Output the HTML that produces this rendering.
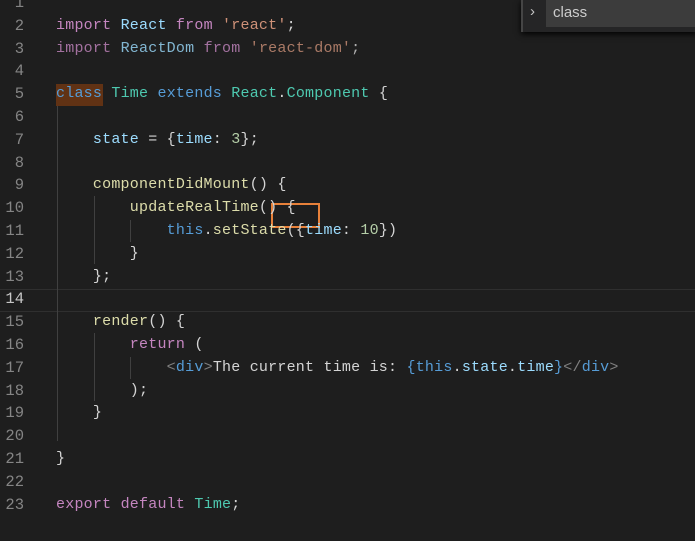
<!DOCTYPE html>
<html><head><meta charset="utf-8"><style>
body{margin:0;width:695px;height:541px;background:#1e1e1e;overflow:hidden;position:relative;font-family:"Liberation Mono",monospace;font-size:15px}
.ln{position:absolute;left:0;width:24px;text-align:right;color:#858585;height:22.8px;line-height:22.8px;font-size:15.5px}
.cd{position:absolute;left:56px;white-space:pre;color:#d4d4d4;height:22.8px;line-height:22.8px;letter-spacing:0.22px}
.k{color:#c586c0}.v{color:#9cdcfe}.s{color:#ce9178}.b{color:#569cd6}.t{color:#4ec9b0}.f{color:#dcdcaa}.n{color:#b5cea8}.g{color:#808080}
.guide{position:absolute;width:1px;background:#404040}
</style></head><body>
<div style="position:absolute;left:0;top:289px;width:695px;height:21px;border-top:1px solid #2f2f2f;border-bottom:1px solid #2f2f2f"></div>
<div class="guide" style="left:57px;top:106px;height:335px"></div>
<div class="guide" style="left:94px;top:196px;height:68px;"></div>
<div class="guide" style="left:94px;top:333px;height:68px;"></div>
<div class="guide" style="left:130px;top:220px;height:22px;"></div>
<div class="guide" style="left:130px;top:357px;height:22px;"></div>
<div style="position:absolute;left:56px;top:84px;width:47px;height:22px;background:#613214"></div>
<div style="position:absolute;left:271px;top:203px;width:45px;height:21px;border:2px solid #e8813a"></div>
<div class="ln" style="top:-8px">1</div>
<div class="ln" style="top:14.8px">2</div><div class="cd" style="top:14.8px"><span class="k">import</span> <span class="v">React</span> <span class="k">from</span> <span class="s">'react'</span>;</div>
<div class="ln" style="top:37.6px">3</div><div class="cd" style="top:37.6px;opacity:.8"><span class="k">import</span> <span class="v">ReactDom</span> <span class="k">from</span> <span class="s">'react-dom'</span>;</div>
<div class="ln" style="top:60.4px">4</div>
<div class="ln" style="top:83.2px">5</div><div class="cd" style="top:83.2px"><span class="b">class</span> <span class="t">Time</span> <span class="b">extends</span> <span class="t">React</span>.<span class="t">Component</span> {</div>
<div class="ln" style="top:106px">6</div>
<div class="ln" style="top:128.8px">7</div><div class="cd" style="top:128.8px">    <span class="v">state</span> = {<span class="v">time</span>: <span class="n">3</span>};</div>
<div class="ln" style="top:151.6px">8</div>
<div class="ln" style="top:174.4px">9</div><div class="cd" style="top:174.4px">    <span class="f">componentDidMount</span>() {</div>
<div class="ln" style="top:197.2px">10</div><div class="cd" style="top:197.2px">        <span class="f">updateRealTime</span>() {</div>
<div class="ln" style="top:220px">11</div><div class="cd" style="top:220px">            <span class="b">this</span>.<span class="f">setState</span>({<span class="v">time</span>: <span class="n">10</span>})</div>
<div class="ln" style="top:242.8px">12</div><div class="cd" style="top:242.8px">        }</div>
<div class="ln" style="top:265.6px">13</div><div class="cd" style="top:265.6px">    };</div>
<div class="ln" style="top:288.4px;color:#c6c6c6">14</div>
<div class="ln" style="top:311.2px">15</div><div class="cd" style="top:311.2px">    <span class="f">render</span>() {</div>
<div class="ln" style="top:334px">16</div><div class="cd" style="top:334px">        <span class="k">return</span> (</div>
<div class="ln" style="top:356.8px">17</div><div class="cd" style="top:356.8px">            <span class="g">&lt;</span><span class="b">div</span><span class="g">&gt;</span>The current time is: <span class="b">{this</span>.<span class="v">state</span>.<span class="v">time</span><span class="b">}</span><span class="g">&lt;/</span><span class="b">div</span><span class="g">&gt;</span></div>
<div class="ln" style="top:379.6px">18</div><div class="cd" style="top:379.6px">        );</div>
<div class="ln" style="top:402.4px">19</div><div class="cd" style="top:402.4px">    }</div>
<div class="ln" style="top:425.2px">20</div>
<div class="ln" style="top:448px">21</div><div class="cd" style="top:448px">}</div>
<div class="ln" style="top:470.8px">22</div>
<div class="ln" style="top:493.6px">23</div><div class="cd" style="top:493.6px"><span class="k">export</span> <span class="k">default</span> <span class="t">Time</span>;</div>
<div style="position:absolute;left:521px;top:0;width:174px;height:32px;background:#252526;border-left:2px solid #454545;box-shadow:0 2px 6px #000"></div>
<div style="position:absolute;left:546px;top:0;width:149px;height:27px;background:#3c3c3c"></div>
<div style="position:absolute;left:530px;top:3px;color:#c5c5c5;font-family:'Liberation Sans',sans-serif;font-size:15px">&#x203A;</div>
<div style="position:absolute;left:553px;top:4px;color:#cccccc;font-family:'Liberation Sans',sans-serif;font-size:15px">class</div>
</body></html>
